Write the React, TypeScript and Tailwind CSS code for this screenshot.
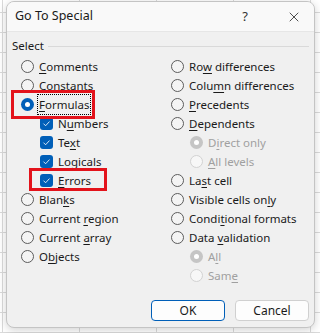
import { X } from "lucide-react";

type Item = { label: string; key: number; kind: "radio" | "check"; checked?: boolean; disabled?: boolean; indent?: boolean };

const left: Item[] = [
  { label: "Comments", key: 0, kind: "radio" },
  { label: "Constants", key: 1, kind: "radio" },
  { label: "Formulas", key: 0, kind: "radio", checked: true },
  { label: "Numbers", key: 1, kind: "check", indent: true },
  { label: "Text", key: 2, kind: "check", indent: true },
  { label: "Logicals", key: 3, kind: "check", indent: true },
  { label: "Errors", key: 0, kind: "check", indent: true },
  { label: "Blanks", key: 4, kind: "radio" },
  { label: "Current region", key: 8, kind: "radio" },
  { label: "Current array", key: 8, kind: "radio" },
  { label: "Objects", key: 1, kind: "radio" },
];

const right: Item[] = [
  { label: "Row differences", key: 2, kind: "radio" },
  { label: "Column differences", key: 4, kind: "radio" },
  { label: "Precedents", key: 0, kind: "radio" },
  { label: "Dependents", key: 0, kind: "radio" },
  { label: "Direct only", key: 1, kind: "radio", checked: true, disabled: true, indent: true },
  { label: "All levels", key: 0, kind: "radio", disabled: true, indent: true },
  { label: "Last cell", key: 2, kind: "radio" },
  { label: "Visible cells only", key: 16, kind: "radio" },
  { label: "Conditional formats", key: 5, kind: "radio" },
  { label: "Data validation", key: 5, kind: "radio" },
  { label: "All", key: 1, kind: "radio", checked: true, disabled: true, indent: true },
  { label: "Same", key: 3, kind: "radio", disabled: true, indent: true },
];

const Radio = ({ checked, disabled }: { checked?: boolean; disabled?: boolean }) => {
  if (disabled) {
    return (
      <span className={`w-[13px] h-[13px] rounded-full flex items-center justify-center ${checked ? "bg-[#c5c5c5]" : "bg-[#f7f7f7] border border-[#d2d2d2]"}`}>
        {checked && <span className="w-[5px] h-[5px] rounded-full bg-white" />}
      </span>
    );
  }
  if (checked) {
    return (
      <span className="w-[13px] h-[13px] rounded-full bg-[#005fb8] flex items-center justify-center">
        <span className="w-[5px] h-[5px] rounded-full bg-white" />
      </span>
    );
  }
  return <span className="w-[13px] h-[13px] rounded-full border border-[#5c5c5c] bg-[#f4f4f4]" />;
};

const Check = () => (
  <span className="w-[13px] h-[13px] rounded-[3px] bg-[#005fb8] flex items-center justify-center">
    <svg viewBox="0 0 12 12" className="w-[9px] h-[9px]" fill="none" stroke="white" strokeWidth="1.1">
      <path d="M2 6.2 L4.8 9 L10 3.4" />
    </svg>
  </span>
);

const Label = ({ item, focus }: { item: Item; focus?: boolean }) => {
  const { label, key } = item;
  return (
    <span className={`${item.disabled ? "text-[#a0a0a0]" : "text-[#1a1a1a]"} ${focus ? "outline outline-1 outline-dotted outline-black outline-offset-[1px]" : ""}`}>
      {label.slice(0, key)}
      <span className="underline underline-offset-2">{label.slice(key, key + 1)}</span>
      {label.slice(key + 1)}
    </span>
  );
};

const Row = ({ item, indent }: { item: Item; indent: string }) => (
  <div className={`h-[19px] flex items-center gap-[5px] ${item.indent ? indent : ""}`}>
    {item.kind === "radio" ? <Radio checked={item.checked} disabled={item.disabled} /> : <Check />}
    <Label item={item} focus={item.label === "Formulas"} />
  </div>
);

export default function App() {
  return (
    <div
      className="w-[320px] h-[333px] overflow-hidden bg-white bg-[linear-gradient(#dadada_1px,transparent_1px),linear-gradient(90deg,#dadada_1px,transparent_1px)] bg-[size:77px_20px] bg-[position:2px_12px] pt-[1px] pl-[6px] text-[11.5px]"
      style={{ fontFamily: '"Noto Sans", "Segoe UI", sans-serif' }}
    >
      <div className="relative w-[309px] h-[327px] rounded-lg border border-[#c4c4c4] bg-[#f0f0f0] shadow-[0_2px_8px_rgba(0,0,0,0.18)] overflow-hidden flex flex-col">
        {/* title bar */}
        <div className="h-[30px] shrink-0 bg-[#f9f9f9] border-b border-[#e6e6e6] flex items-center pl-[8px]">
          <span className="text-[#1a1a1a] text-[12.5px]">Go To Special</span>
          <span className="ml-auto text-[#333] text-[13px] mr-[38px]">?</span>
          <X size={16} strokeWidth={1.2} className="mr-[12px] text-[#222]" />
        </div>

        <div className="px-[5px] pt-[6px]">
          <div className="h-[16px] flex items-center gap-[4px]">
            <span className="text-[#1a1a1a]">Select</span>
            <span className="flex-1 h-px bg-[#d9d9d9]" />
          </div>
          <div className="flex mt-[3px] pl-[9px]">
            <div className="w-[150px] flex flex-col">
              {left.map((it) => (
                <Row key={it.label} item={it} indent="pl-[19px]" />
              ))}
            </div>
            <div className="flex flex-col">
              {right.map((it) => (
                <Row key={it.label} item={it} indent="pl-[19px]" />
              ))}
            </div>
          </div>
          <div className="flex justify-end gap-[10px] mt-[15px]">
            <button className="w-[74px] h-[21px] rounded-[4px] bg-[#fdfdfd] border border-[#005fb8] text-[#1a1a1a] text-[12px] leading-none">OK</button>
            <button className="w-[74px] h-[21px] rounded-[4px] bg-[#fdfdfd] border border-[#d0d0d0] text-[#1a1a1a] text-[12px] leading-none">Cancel</button>
          </div>
        </div>

        {/* annotation boxes */}
        <div className="absolute left-[4px] top-[88px] w-[84px] h-[29px] border-[3px] border-[#e3131b]" />
        <div className="absolute left-[22px] top-[166px] w-[78px] h-[23px] border-[3px] border-[#e3131b]" />
      </div>
    </div>
  );
}
